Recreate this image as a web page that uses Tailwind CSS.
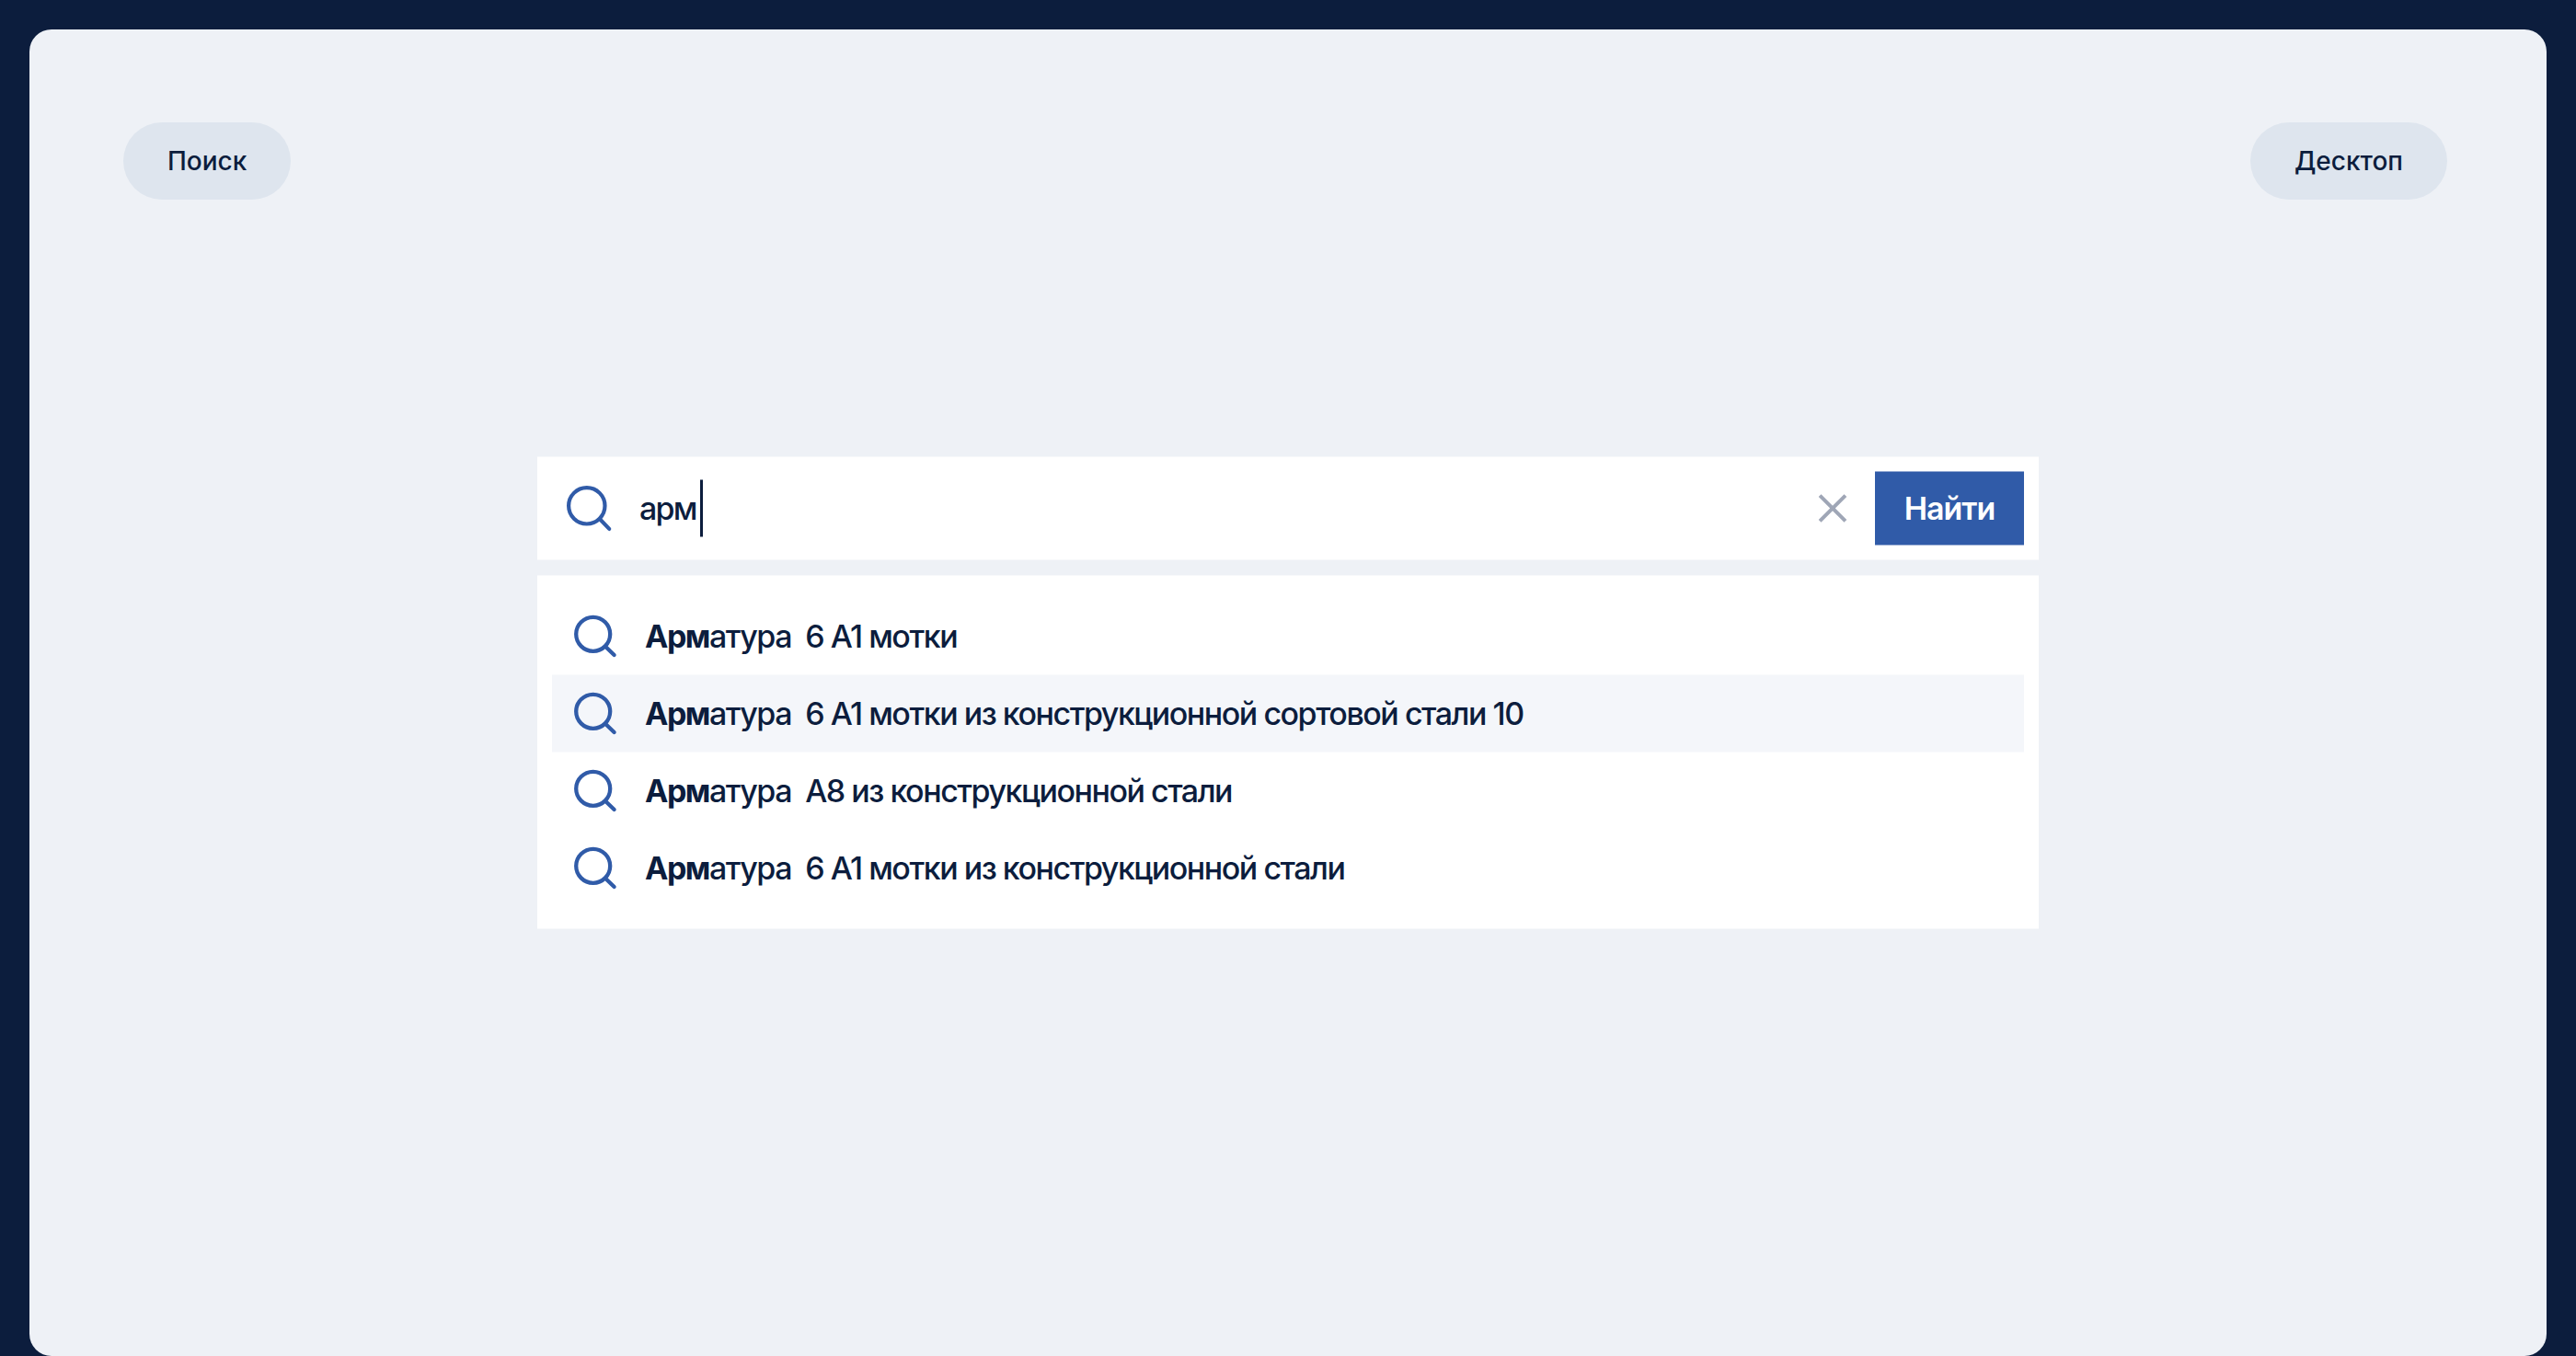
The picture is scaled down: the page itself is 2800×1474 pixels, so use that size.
<!DOCTYPE html>
<html lang="ru">
<head>
  <meta charset="UTF-8">
  <meta name="viewport" content="width=device-width, initial-scale=1">
  <title>Поиск</title>
  <script src="https://cdn.jsdelivr.net/npm/@tailwindcss/browser@4"></script>
</head>
<body class="min-h-screen bg-[#0c1d3d] px-8 pt-8 font-['Inter',sans-serif] text-[#0c1d3d]">

<main class="h-[1442px] rounded-3xl bg-[#eef1f6]">

  <!-- Labels -->
  <header class="flex justify-between pt-[101px] pl-[102px] pr-[108px]">
    <span class="flex h-[84px] items-center rounded-full bg-[#dee5ee] px-12 text-[28px] font-medium">Поиск</span>
    <span class="flex h-[84px] items-center rounded-full bg-[#dee5ee] px-12 text-[28px] font-medium">Десктоп</span>
  </header>

  <section class="mx-auto mt-[279px] w-[1632px] translate-y-[0.5px] text-[34px]">

    <!-- Search field -->
    <form class="flex h-28 items-center bg-white pr-4 pl-8">
      <svg class="h-12 w-[50px] overflow-visible" viewBox="0 0 50 48" fill="none" stroke="#305ba8" stroke-width="4.2" stroke-linecap="round">
        <circle cx="21.8" cy="21.3" r="19.7"/>
        <path d="M36 35.8L46.2 46.4"/>
      </svg>
      <span class="ml-[29px] pb-[2px] tracking-[-1.8px] font-medium">арм</span>
      <span class="ml-[4px] h-[62px] w-[3px] bg-[#0c1d3d]"></span>
      <svg class="ml-auto mr-[30px] h-8 w-8" viewBox="0 0 32 32" fill="none" stroke="#9fa6b6" stroke-width="4">
        <path d="M2.1 2.1L29.9 29.9M29.9 2.1L2.1 29.9"/>
      </svg>
      <button type="button" class="h-20 w-[162px] bg-[#305ba8] pb-[2px] font-semibold tracking-[-1px] text-white">Найти</button>
    </form>

    <!-- Suggestions -->
    <ul class="mt-[17px] bg-white px-4 py-6 font-medium tracking-[-1.48px]">
      <li class="flex h-21 items-center pl-6">
        <svg class="mr-[27px] h-12 w-[50px]" viewBox="0 0 50 48" fill="none" stroke="#305ba8" stroke-width="4.3" stroke-linecap="round">
          <circle cx="20.7" cy="21.8" r="18.5"/>
          <path d="M34 35.2L43.6 44.5"/>
        </svg>
        <p class="pb-[2px] whitespace-pre"><b class="font-bold">Арм</b>атура  6 А1 мотки</p>
      </li>
      <li class="flex h-21 items-center bg-[#f4f6fa] pl-6">
        <svg class="mr-[27px] h-12 w-[50px]" viewBox="0 0 50 48" fill="none" stroke="#305ba8" stroke-width="4.3" stroke-linecap="round">
          <circle cx="20.7" cy="21.8" r="18.5"/>
          <path d="M34 35.2L43.6 44.5"/>
        </svg>
        <p class="pb-[2px] whitespace-pre"><b class="font-bold">Арм</b>атура  6 А1 мотки из конструкционной сортовой стали 10</p>
      </li>
      <li class="flex h-21 items-center pl-6">
        <svg class="mr-[27px] h-12 w-[50px]" viewBox="0 0 50 48" fill="none" stroke="#305ba8" stroke-width="4.3" stroke-linecap="round">
          <circle cx="20.7" cy="21.8" r="18.5"/>
          <path d="M34 35.2L43.6 44.5"/>
        </svg>
        <p class="pb-[2px] whitespace-pre"><b class="font-bold">Арм</b>атура  А8 из конструкционной стали</p>
      </li>
      <li class="flex h-21 items-center pl-6">
        <svg class="mr-[27px] h-12 w-[50px]" viewBox="0 0 50 48" fill="none" stroke="#305ba8" stroke-width="4.3" stroke-linecap="round">
          <circle cx="20.7" cy="21.8" r="18.5"/>
          <path d="M34 35.2L43.6 44.5"/>
        </svg>
        <p class="pb-[2px] whitespace-pre"><b class="font-bold">Арм</b>атура  6 А1 мотки из конструкционной стали</p>
      </li>
    </ul>
  </section>

</main>

</body>
</html>
